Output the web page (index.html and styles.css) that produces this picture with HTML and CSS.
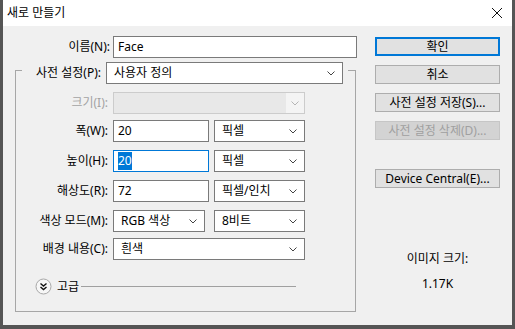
FILE: index.html
```html
<!DOCTYPE html>
<html lang="ko">

<head>
    <meta charset="UTF-8">
    <title>새로 만들기</title>
    <link rel="stylesheet" href="styles.css">
</head>

<body>
    <div class="window">
        <div class="titlebar">
            <span class="title">새로 만들기</span>
            <svg class="close" width="10" height="10" viewBox="0 0 10 10">
                <path d="M0 0L10 10M10 0L0 10" stroke="#111" stroke-width="1" />
            </svg>
        </div>

        <div class="content">
            <div class="main">
                <div class="name-row">
                    <span class="label name-label">이름(N):</span>
                    <div class="field name-field">Face</div>
                </div>

                <div class="group">
                    <div class="group-head">
                        <span class="label head-label">사전 설정(P):</span>
                        <div class="field combo preset">
                            <span>사용자 정의</span>
                            <svg class="arrow" width="8" height="5" viewBox="0 0 8 5"><path d="M0.5 0.5L4 4L7.5 0.5" /></svg>
                        </div>
                    </div>

                    <div class="rows">
                        <div class="row size-row">
                            <span class="label disabled">크기(I):</span>
                            <div class="field combo wide off">
                                <span class="drop"><svg class="arrow" width="8" height="5" viewBox="0 0 8 5"><path d="M0.5 0.5L4 4L7.5 0.5" /></svg></span>
                            </div>
                        </div>
                        <div class="row">
                            <span class="label">폭(W):</span>
                            <div class="field">20</div>
                            <div class="field combo">
                                <span>픽셀</span>
                                <svg class="arrow" width="8" height="5" viewBox="0 0 8 5"><path d="M0.5 0.5L4 4L7.5 0.5" /></svg>
                            </div>
                        </div>
                        <div class="row">
                            <span class="label">높이(H):</span>
                            <div class="field focus"><span class="sel">20</span></div>
                            <div class="field combo">
                                <span>픽셀</span>
                                <svg class="arrow" width="8" height="5" viewBox="0 0 8 5"><path d="M0.5 0.5L4 4L7.5 0.5" /></svg>
                            </div>
                        </div>
                        <div class="row">
                            <span class="label">해상도(R):</span>
                            <div class="field">72</div>
                            <div class="field combo">
                                <span>픽셀/인치</span>
                                <svg class="arrow" width="8" height="5" viewBox="0 0 8 5"><path d="M0.5 0.5L4 4L7.5 0.5" /></svg>
                            </div>
                        </div>
                        <div class="row">
                            <span class="label">색상 모드(M):</span>
                            <div class="field combo mode">
                                <span>RGB 색상</span>
                                <svg class="arrow" width="8" height="5" viewBox="0 0 8 5"><path d="M0.5 0.5L4 4L7.5 0.5" /></svg>
                            </div>
                            <div class="field combo">
                                <span>8비트</span>
                                <svg class="arrow" width="8" height="5" viewBox="0 0 8 5"><path d="M0.5 0.5L4 4L7.5 0.5" /></svg>
                            </div>
                        </div>
                        <div class="row bg-row">
                            <span class="label">배경 내용(C):</span>
                            <div class="field combo wide">
                                <span>흰색</span>
                                <svg class="arrow" width="8" height="5" viewBox="0 0 8 5"><path d="M0.5 0.5L4 4L7.5 0.5" /></svg>
                            </div>
                        </div>
                    </div>

                    <div class="advanced">
                        <svg class="toggle" width="17" height="17" viewBox="0 0 17 17">
                            <circle cx="8.5" cy="8.5" r="7.5" fill="#f7f7f7" stroke="#a8a8a8" />
                            <path d="M5.5 5.5L8.5 8L11.5 5.5M5.5 9L8.5 11.5L11.5 9" fill="none" stroke="#111" stroke-width="1.4" />
                        </svg>
                        <span class="adv-text">고급</span>
                        <span class="adv-line"></span>
                    </div>
                </div>
            </div>

            <div class="side">
                <div class="btn default">확인</div>
                <div class="btn">취소</div>
                <div class="btn">사전 설정 저장(S)...</div>
                <div class="btn off">사전 설정 삭제(D)...</div>
                <div class="btn device">Device Central(E)...</div>
                <div class="size-title">이미지 크기:</div>
                <div class="size-value">1.17K</div>
            </div>
        </div>
    </div>
</body>

</html>
```

FILE: styles.css
```css
/* Window frame */
body {
    margin: 0;
    font-family: "Noto Sans", "Noto Sans CJK KR", sans-serif;
    font-size: 12px;
    color: #000;
}

.window {
    width: 515px;
    height: 329px;
    box-sizing: border-box;
    border: 3px solid #555;
    border-top: 0;
    border-bottom-width: 4px;
    background: #f0f0f0;
    display: flex;
    flex-direction: column;
}

.titlebar {
    height: 26px;
    flex: none;
    background: #fff;
    display: flex;
    align-items: center;
    justify-content: space-between;
    padding: 0 10px 0 4px;
}

.title {
    line-height: 16px;
}

.content {
    display: flex;
    padding: 10px 0 0 12px;
}

/* Left column */
.main {
    width: 342px;
}

.label {
    text-align: right;
    white-space: nowrap;
    line-height: 16px;
}

.label.disabled {
    color: #a3a3a3;
}

.name-row {
    display: flex;
    align-items: center;
    gap: 3px;
    height: 22px;
}

.name-label {
    width: 95px;
}

.name-field {
    flex: 1;
}

.field {
    box-sizing: border-box;
    height: 22px;
    border: 1px solid #7a7a7a;
    background: #fff;
    padding: 0 4px;
    display: flex;
    align-items: center;
    line-height: 16px;
    white-space: nowrap;
}

.field.focus {
    border-color: #0078d7;
}

.sel {
    background: #0078d7;
    color: #fff;
    padding: 1px 0;
}

.combo {
    justify-content: space-between;
    padding: 0 7px 0 7px;
}

.arrow {
    flex: none;
}

.arrow path {
    fill: none;
    stroke: #444;
    stroke-width: 1;
}

.combo.off {
    border-color: #cccccc;
    background: #e8e8e8;
    padding: 0;
    justify-content: flex-end;
}

.drop {
    width: 18px;
    height: 100%;
    background: #f4f4f4;
    display: flex;
    align-items: center;
    justify-content: center;
}

.drop .arrow path {
    stroke: #b5b5b5;
}

/* Group box */
.group {
    margin-top: 12px;
    width: 341px;
    height: 242px;
    box-sizing: border-box;
    border: 1px solid #a6a6a6;
}

.group-head {
    display: flex;
    align-items: center;
    gap: 5px;
    width: fit-content;
    margin: -9px 0 0 6px;
    padding-right: 5px;
    background: #f0f0f0;
}

.head-label {
    width: 79px;
}

.preset {
    width: 237px;
}

.rows {
    display: flex;
    flex-direction: column;
    gap: 8px;
    margin-top: 8px;
}

.row {
    display: grid;
    grid-template-columns: 92px 96px 91px;
    column-gap: 5px;
    align-items: center;
    height: 22px;
}

.size-row {
    margin-bottom: -2px;
}

.bg-row {
    margin-top: -2px;
}

.wide {
    grid-column: span 2;
}

.mode {
    width: 92px;
}

.advanced {
    display: flex;
    align-items: center;
    width: 261px;
    height: 17px;
    margin: 18px 0 0 19px;
}

.adv-text {
    margin-left: 5px;
    line-height: 16px;
}

.adv-line {
    flex: 1;
    height: 1px;
    margin-left: 2px;
    background: #a0a0a0;
}

/* Right column */
.side {
    width: 125px;
    margin-left: 18px;
    padding-top: 1px;
    display: flex;
    flex-direction: column;
    gap: 9px;
    text-align: center;
}

.btn {
    box-sizing: border-box;
    height: 19px;
    border: 1px solid #adadad;
    background: #e1e1e1;
    line-height: 17px;
    white-space: nowrap;
}

.btn.default {
    border: 2px solid #0078d7;
    line-height: 15px;
}

.btn.off {
    border-color: #c6c6c6;
    background: #d3d3d3;
    color: #a0a0a0;
}

.btn.device {
    margin-top: 20px;
}

.size-title {
    margin-top: 54px;
    line-height: 16px;
}

.size-value {
    line-height: 16px;
}
```
